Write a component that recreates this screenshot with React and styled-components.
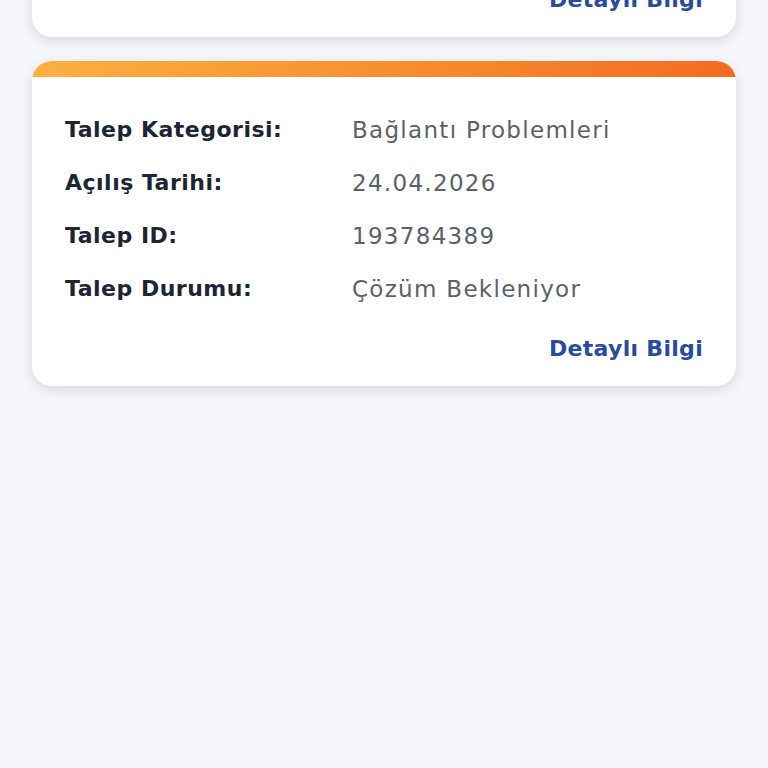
import React from 'react'
import styled, { createGlobalStyle } from 'styled-components'

const GlobalStyle = createGlobalStyle`
  html, body {
    margin: 0;
    padding: 0;
    background: #f4f6f9;
    font-family: "DejaVu Sans", "Noto Sans", sans-serif;
  }
  #root {
    min-height: 100vh;
    overflow: hidden;
  }
`

const tickets = [
  {
    id: '193784388',
    category: 'Bağlantı Problemleri',
    date: '24.04.2026',
    status: 'Çözüm Bekleniyor',
    accent: false
  },
  {
    id: '193784389',
    category: 'Bağlantı Problemleri',
    date: '24.04.2026',
    status: 'Çözüm Bekleniyor',
    accent: true
  }
]

const App = () => {
  return (
    <Page>
      <GlobalStyle />
      <List>
        {tickets.map(t => (
          <Card key={t.id}>
            <AccentBar visible={t.accent ? 1 : 0} />
            <CardBody>
              <Row>
                <Label>Talep Kategorisi:</Label>
                <Value>{t.category}</Value>
              </Row>
              <Row>
                <Label>Açılış Tarihi:</Label>
                <Value>{t.date}</Value>
              </Row>
              <Row>
                <Label>Talep ID:</Label>
                <Value>{t.id}</Value>
              </Row>
              <Row>
                <Label>Talep Durumu:</Label>
                <Value>{t.status}</Value>
              </Row>
              <LinkRow>
                <DetailLink href="#">Detaylı Bilgi</DetailLink>
              </LinkRow>
            </CardBody>
          </Card>
        ))}
      </List>
    </Page>
  )
}

export default App

const Page = styled.div`
  width: 100%;
  min-height: 100vh;
  background: #f4f6f9;
`

const List = styled.div`
  display: flex;
  flex-direction: column;
  gap: 24px;
  padding: 0 32px 32px;
  margin-top: -288px;
`

const Card = styled.div`
  background: #ffffff;
  border-radius: 20px;
  box-shadow: 0 4px 12px rgba(20, 30, 50, 0.13);
  overflow: hidden;
`

const AccentBar = styled.div`
  height: 16px;
  background: ${({ visible }) =>
    visible ? 'linear-gradient(90deg, #fbb042 0%, #f7902f 50%, #f46b21 100%)' : '#ffffff'};
`

const CardBody = styled.div`
  display: flex;
  flex-direction: column;
  padding: 26px 33px 23px;
`

const Row = styled.div`
  display: grid;
  grid-template-columns: 287px 1fr;
  height: 53px;
  align-items: center;
`

const Label = styled.span`
  font-size: 22px;
  font-weight: 700;
  color: #1d2433;
  letter-spacing: 0.5px;
`

const Value = styled.span`
  font-size: 23px;
  font-weight: 400;
  color: #5b606b;
  letter-spacing: 1.3px;
`

const LinkRow = styled.div`
  display: flex;
  justify-content: flex-end;
  padding-top: 18px;
  height: 30px;
  align-items: center;
`

const DetailLink = styled.a`
  font-size: 22px;
  font-weight: 700;
  color: #284b9b;
  text-decoration: none;
  letter-spacing: 0.3px;
`
